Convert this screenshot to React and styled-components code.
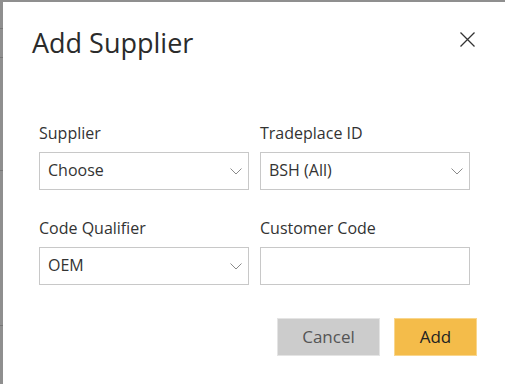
import React from "react";
import styled, { createGlobalStyle } from "styled-components";

const GlobalStyle = createGlobalStyle`
  html, body { margin: 0; padding: 0; }
  body {
    background: #8f8f8f;
    font-family: "Open Sans", "Noto Sans", Arial, sans-serif;
    overflow: hidden;
  }
`;

const Backdrop = styled.div`
  min-height: 384px;
  box-sizing: border-box;
  padding: 2px 0 0 3px;
  background-color: #8f8f8f;
  background-image:
    linear-gradient(#777 0 0),
    linear-gradient(#777 0 0),
    linear-gradient(#777 0 0),
    linear-gradient(#777 0 0);
  background-repeat: no-repeat;
  background-size: 3px 1px;
  background-position: 0 28px, 0 57px, 0 170px, 0 325px;
`;

const Modal = styled.div`
  background: #ffffff;
  min-height: 382px;
  box-sizing: border-box;
  display: flex;
  flex-direction: column;
`;

const Header = styled.div`
  display: flex;
  align-items: flex-start;
  justify-content: space-between;
  padding: 22px 30px 0 29px;
`;

const Title = styled.h2`
  margin: 0;
  font-size: 27px;
  line-height: 37px;
  font-weight: 400;
  color: #2b2b2b;
`;

const CloseButton = styled.button`
  margin-top: 8px;
  width: 15px;
  height: 15px;
  padding: 0;
  border: none;
  background: transparent;
  cursor: pointer;
  display: flex;
  svg { display: block; }
`;

const Form = styled.div`
  display: grid;
  grid-template-columns: 210px 210px;
  column-gap: 11px;
  row-gap: 27px;
  padding: 61px 0 0 36px;
`;

const Field = styled.div`
  display: flex;
  flex-direction: column;
  gap: 8px;
`;

const Label = styled.label`
  font-size: 16px;
  line-height: 22px;
  color: #333333;
`;

const Box = styled.div`
  height: 38px;
  box-sizing: border-box;
  border: 1px solid #c8c8c8;
  background: #fff;
  display: flex;
  align-items: center;
  justify-content: space-between;
  padding: 0 6px 3px 8px;
  font-size: 16px;
  color: #333333;
`;

const Chevron = styled.svg`
  width: 12px;
  height: 7px;
  margin-top: 3px;
  flex-shrink: 0;
`;

const Footer = styled.div`
  display: flex;
  justify-content: flex-end;
  gap: 14px;
  padding: 33px 28px 0 0;
`;

const Button = styled.button`
  height: 38px;
  width: ${(p) => p.$w}px;
  box-sizing: border-box;
  border: 1px solid ${(p) => (p.$primary ? "#f9d68d" : "#e4e4e4")};
  background: ${(p) => (p.$primary ? "#f4bc4a" : "#cccccc")};
  color: ${(p) => (p.$primary ? "#222222" : "#555555")};
  font-family: inherit;
  font-size: 17px;
  padding: 0 0 2px;
  cursor: pointer;
`;

const Select = ({ value }) => (
  <Box>
    <span>{value}</span>
    <Chevron viewBox="0 0 12 7">
      <path d="M0.5 0.5 L6 6 L11.5 0.5" fill="none" stroke="#8a8a8a" strokeWidth="1" />
    </Chevron>
  </Box>
);

export default function App() {
  return (
    <>
      <GlobalStyle />
      <Backdrop>
        <Modal>
          <Header>
            <Title>Add Supplier</Title>
            <CloseButton aria-label="Close">
              <svg width="15" height="15" viewBox="0 0 15 15">
                <path d="M0.5 0.5 L14.5 14.5 M14.5 0.5 L0.5 14.5" stroke="#333" strokeWidth="1.3" fill="none" />
              </svg>
            </CloseButton>
          </Header>
          <Form>
            <Field>
              <Label>Supplier</Label>
              <Select value="Choose" />
            </Field>
            <Field>
              <Label>Tradeplace ID</Label>
              <Select value="BSH (All)" />
            </Field>
            <Field>
              <Label>Code Qualifier</Label>
              <Select value="OEM" />
            </Field>
            <Field>
              <Label>Customer Code</Label>
              <Box />
            </Field>
          </Form>
          <Footer>
            <Button $w={103}>Cancel</Button>
            <Button $w={83} $primary>Add</Button>
          </Footer>
        </Modal>
      </Backdrop>
    </>
  );
}
